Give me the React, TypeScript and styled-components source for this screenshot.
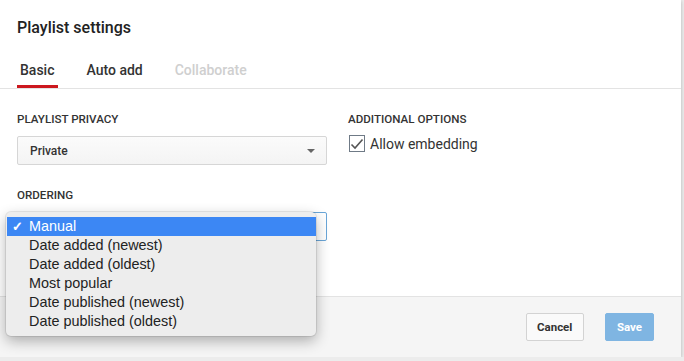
import React from 'react'
import styled, { createGlobalStyle } from 'styled-components'

const Global = createGlobalStyle`
	html, body {
		margin: 0;
		padding: 0;
		background: #ececec;
		font-family: Roboto, "Liberation Sans", Arial, sans-serif;
	}
`

const Dialog = styled.div`
	width: 681px;
	height: 357px;
	background: #fff;
	display: flex;
	flex-direction: column;
	box-shadow: 0 1px 4px rgba(0, 0, 0, 0.25);
`

const Title = styled.h1`
	margin: 0;
	padding: 18px 17px 0;
	font-size: 16px;
	line-height: 20px;
	font-weight: 500;
	color: #222;
`

const TabBar = styled.div`
	display: flex;
	gap: 25px;
	margin-top: 22px;
	padding: 0 17px;
	border-bottom: 1px solid #e3e3e3;
`

const Tab = styled.div<{ $active?: boolean; $disabled?: boolean }>`
	padding: 0 4px 5px 3px;
	font-size: 14px;
	line-height: 20px;
	font-weight: 500;
	color: ${p => (p.$disabled ? '#cfcfcf' : '#333')};
	border-bottom: 3px solid ${p => (p.$active ? '#cc181e' : 'transparent')};
`

const Body = styled.div`
	display: grid;
	grid-template-columns: 310px 1fr;
	column-gap: 21px;
	padding: 23px 17px 0;
	align-items: start;
`

const Column = styled.div`
	display: flex;
	flex-direction: column;
`

const Label = styled.div<{ $gap?: number }>`
	margin-top: ${p => p.$gap || 0}px;
	font-size: 11.6px;
	line-height: 14px;
	font-weight: 500;
	color: #333;
	text-transform: uppercase;
`

const Field = styled.div`
	position: relative;
	margin-top: 10px;
`

const Select = styled.div<{ $focus?: boolean }>`
	box-sizing: border-box;
	height: 29px;
	display: flex;
	align-items: center;
	justify-content: space-between;
	padding: 0 11px 0 12px;
	border: 1px solid ${p => (p.$focus ? '#6aa6d8' : '#d6d6d6')};
	border-radius: 2px;
	background: ${p => (p.$focus ? '#fff' : 'linear-gradient(#fbfbfb, #f4f4f4)')};
	font-size: 12px;
	font-weight: 500;
	color: #333;
`

const Arrow = styled.span`
	width: 0;
	height: 0;
	border-left: 4px solid transparent;
	border-right: 4px solid transparent;
	border-top: 4px solid #666;
`

const Menu = styled.ul`
	position: absolute;
	top: 0;
	left: -11px;
	width: 310px;
	margin: 0;
	padding: 5px 0;
	list-style: none;
	background: #ededed;
	border-radius: 5px;
	box-shadow: 0 0 0 1px rgba(0, 0, 0, 0.08), 0 5px 14px rgba(0, 0, 0, 0.3);
	font-family: "Liberation Sans", Arial, sans-serif;
	font-size: 14.4px;
	z-index: 2;
`

const MenuItem = styled.li<{ $selected?: boolean }>`
	position: relative;
	height: 19px;
	line-height: 19px;
	margin: 0 0 0 1px;
	padding-left: 22px;
	color: ${p => (p.$selected ? '#fff' : '#222')};
	background: ${p => (p.$selected ? '#3c87f4' : 'transparent')};
`

const Check = styled.span`
	position: absolute;
	left: 5px;
	top: 0;
	font-size: 13px;
	font-weight: 700;
`

const CheckRow = styled.label`
	display: flex;
	align-items: center;
	gap: 5px;
	margin-top: 9px;
	padding-left: 1px;
	font-size: 14px;
	color: #333;
`

const Box = styled.span`
	box-sizing: border-box;
	width: 16px;
	height: 17px;
	border: 1px solid #6f7a86;
	background: #fff;
	display: flex;
	align-items: center;
	justify-content: center;
`

const Footer = styled.div`
	margin-top: auto;
	height: 60px;
	display: flex;
	align-items: center;
	justify-content: flex-end;
	gap: 21px;
	padding: 0 27px;
	background: #f5f5f5;
	border-top: 1px solid #e3e3e3;
`

const Button = styled.button<{ $primary?: boolean }>`
	box-sizing: border-box;
	height: 28px;
	padding: 0 ${p => (p.$primary ? 11 : 10.5)}px;
	border-radius: 2px;
	border: 1px solid ${p => (p.$primary ? '#7fb5e2' : '#d3d3d3')};
	background: ${p => (p.$primary ? '#7fb5e2' : '#fafafa')};
	color: ${p => (p.$primary ? '#fff' : '#333')};
	font-family: Roboto, "Liberation Sans", Arial, sans-serif;
	font-size: 11.5px;
	font-weight: 700;
`

const orders = [
	'Manual',
	'Date added (newest)',
	'Date added (oldest)',
	'Most popular',
	'Date published (newest)',
	'Date published (oldest)',
]

export default function App() {
	return (
		<>
			<Global />
			<Dialog>
				<Title>Playlist settings</Title>
				<TabBar>
					<Tab $active>Basic</Tab>
					<Tab>Auto add</Tab>
					<Tab $disabled>Collaborate</Tab>
				</TabBar>
				<Body>
					<Column>
						<Label>Playlist privacy</Label>
						<Field>
							<Select>
								Private
								<Arrow />
							</Select>
						</Field>
						<Label $gap={23}>Ordering</Label>
						<Field>
							<Select $focus />
							<Menu>
								{orders.map((o, i) => (
									<MenuItem key={o} $selected={i === 0}>
										{i === 0 && <Check>✓</Check>}
										{o}
									</MenuItem>
								))}
							</Menu>
						</Field>
					</Column>
					<Column>
						<Label>Additional options</Label>
						<CheckRow>
							<Box>
								<svg width="14" height="12" viewBox="0 0 14 12">
									<path d="M1.5 6.5 L5 10 L12.5 1.5" fill="none" stroke="#555" strokeWidth="1.6" />
								</svg>
							</Box>
							Allow embedding
						</CheckRow>
					</Column>
				</Body>
				<Footer>
					<Button>Cancel</Button>
					<Button $primary>Save</Button>
				</Footer>
			</Dialog>
		</>
	)
}
